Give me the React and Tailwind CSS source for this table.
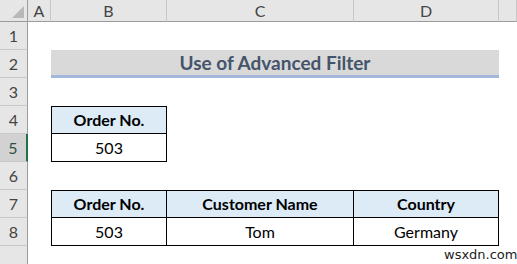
import React from 'react';

const font = { fontFamily: 'Lato, "Open Sans", sans-serif' };

const cols = ['A', 'B', 'C', 'D', ''];

// cell helper: which border sides get drawn in black
const Cell = ({ children, className = '' }) => (
  <div className={`flex items-center justify-center text-[16px] text-black ${className}`}>{children}</div>
);

const RowHead = ({ n, active }) => (
  <div
    className={`flex items-center justify-center border-b border-[#c8c8c8] text-[16px] ${
      active ? 'bg-[#d2d2d2] border-r-2 border-r-[#217346] text-[#2f4f3f]' : 'bg-[#e6e6e6] border-r border-r-[#9b9b9b] text-[#444]'
    }`}
  >
    {n}
  </div>
);

export default function App() {
  return (
    <div className="relative w-[517px] h-[264px] overflow-hidden bg-white" style={font}>
      <div className="grid grid-cols-[28px_23px_116px_187px_145px_18px] grid-rows-[22px_repeat(8,28px)_18px]">
        {/* column header */}
        <div className="relative bg-[#e6e6e6] border-b border-r border-[#9b9b9b]">
          <div className="absolute right-[3px] bottom-[3px] w-0 h-0 border-l-[12px] border-l-transparent border-b-[12px] border-b-[#b8b8b8]" />
        </div>
        {cols.map((c, i) => (
          <div
            key={i}
            className="flex items-center justify-center bg-[#e6e6e6] border-b border-b-[#9b9b9b] border-r border-r-[#c8c8c8] text-[16px] text-[#444]"
          >
            {c}
          </div>
        ))}

        {/* row 1 */}
        <RowHead n={1} />
        <div className="col-span-5" />

        {/* row 2 - title */}
        <RowHead n={2} />
        <div />
        <div className="col-span-3 flex items-center justify-center bg-[#d9d9d9] border-b-[3px] border-[#a3b7dd] pt-[1px] text-[19px] font-bold text-[#44546a]">
          Use of Advanced Filter
        </div>
        <div />

        {/* row 3 */}
        <RowHead n={3} />
        <div className="col-span-5" />

        {/* row 4 */}
        <RowHead n={4} />
        <div />
        <Cell className="bg-[#ddebf7] border border-black font-bold">Order No.</Cell>
        <div className="col-span-3" />

        {/* row 5 */}
        <RowHead n={5} active />
        <div />
        <Cell className="border-x border-b border-black">503</Cell>
        <div className="col-span-3" />

        {/* row 6 */}
        <RowHead n={6} />
        <div className="col-span-5" />

        {/* row 7 */}
        <RowHead n={7} />
        <div />
        <Cell className="bg-[#ddebf7] border border-black font-bold">Order No.</Cell>
        <Cell className="bg-[#ddebf7] border-y border-r border-black font-bold">Customer Name</Cell>
        <Cell className="bg-[#ddebf7] border-y border-r border-black font-bold">Country</Cell>
        <div />

        {/* row 8 */}
        <RowHead n={8} />
        <div />
        <Cell className="border-x border-b border-black">503</Cell>
        <Cell className="border-r border-b border-black">Tom</Cell>
        <Cell className="border-r border-b border-black">Germany</Cell>
        <div />

        {/* row 9 (partial) */}
        <div className="bg-[#e6e6e6] border-r border-[#9b9b9b]" />
        <div className="col-span-5" />
      </div>
      <div
        className="absolute left-[444px] top-[245px] text-[13px] text-[#222]"
        style={{ fontFamily: '"DejaVu Sans", sans-serif' }}
      >
        wsxdn.com
      </div>
    </div>
  );
}
